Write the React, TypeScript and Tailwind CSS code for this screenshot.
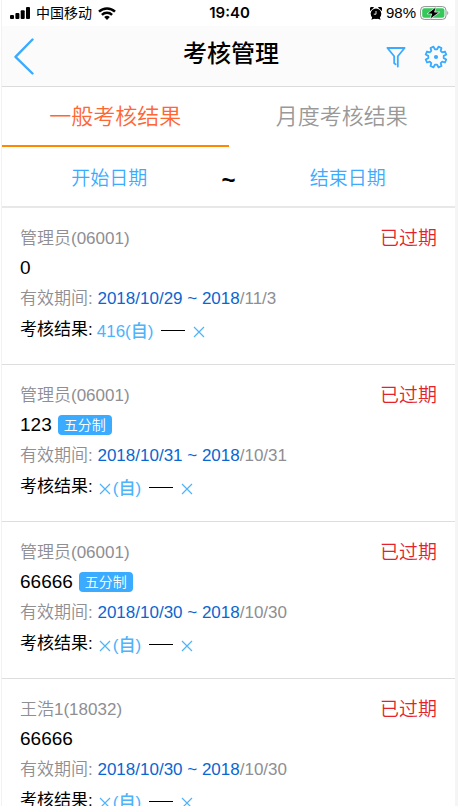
type Assessment = {
  id: number;
  person: string;
  title: string;
  tag?: string;
  range: string;
  rest: string;
  score?: string;
};

const ITEMS: Assessment[] = [
  { id: 1, person: '管理员(06001)', title: '0', range: '2018/10/29 ~ 2018', rest: '/11/3', score: '416' },
  { id: 2, person: '管理员(06001)', title: '123', tag: '五分制', range: '2018/10/31 ~ 2018', rest: '/10/31' },
  { id: 3, person: '管理员(06001)', title: '66666', tag: '五分制', range: '2018/10/30 ~ 2018', rest: '/10/30' },
  { id: 4, person: '王浩1(18032)', title: '66666', range: '2018/10/30 ~ 2018', rest: '/10/30' },
];

function Cross() {
  return (
    <svg viewBox="0 0 12 12" className="w-3 h-3" fill="none" stroke="currentColor" strokeWidth="1.2">
      <path d="M1 1l10 10M11 1L1 11" />
    </svg>
  );
}

function StatusBar() {
  return (
    <div className="grid grid-cols-3 items-center h-[26px] pl-2 pr-1.5 text-black">
      <div className="flex items-center gap-1.5">
        <svg viewBox="0 0 20 12" className="w-5 h-3" fill="currentColor">
          <rect x="0" y="8" width="4" height="4" rx="1" />
          <rect x="5.4" y="6" width="4" height="6" rx="1" />
          <rect x="10.7" y="3.2" width="4" height="8.8" rx="1" />
          <rect x="16" y="0" width="4" height="12" rx="1" />
        </svg>
        <span className="text-[14px] leading-5 whitespace-nowrap">中国移动</span>
        <svg viewBox="0 0 18 13" className="w-[18px] h-[13px]" fill="none" stroke="currentColor" strokeWidth="2.5">
          <path d="M1 4.7a11.5 11.5 0 0 1 16 0" />
          <path d="M3.9 7.9a7.4 7.4 0 0 1 10.2 0" />
          <path d="M9 13l-2.8-2.9a4 4 0 0 1 5.6 0z" fill="currentColor" stroke="none" />
        </svg>
      </div>
      <span className="text-center text-[15px] leading-5 font-semibold font-['Inter',sans-serif]">19:40</span>
      <div className="flex items-center justify-end gap-1">
        <svg viewBox="0 0 12 13" className="w-3 h-[13px]" fill="currentColor">
          <circle cx="6" cy="6.8" r="5.3" />
          <path d="M0.2 4A2.5 2.5 0 0 1 4 0.6zM11.8 4A2.5 2.5 0 0 0 8 0.6zM1.4 12.8l1-3 2.4 1.6zM10.6 12.8l-1-3-2.4 1.6z" />
          <path d="M6 4v3.2H3.8" fill="none" stroke="#fff" strokeWidth="0.9" />
        </svg>
        <span className="text-[15px] leading-5">98%</span>
        <svg viewBox="0 0 29 14" className="w-[29px] h-[14px]">
          <rect x="0.6" y="0.6" width="25.4" height="12.8" rx="3.6" fill="#fff" stroke="#8f8f8f" />
          <rect x="2.2" y="2.2" width="22.2" height="9.6" rx="2" fill="#34c759" />
          <path d="M27.3 5c1.3 0.5 1.3 3.6 0 4.1z" fill="#8f8f8f" />
          <path d="M16.2 0.8L7 7.9h4.7L10 13.2l9.6-7.1h-5z" fill="#000" stroke="#fff" strokeWidth="0.7" />
        </svg>
      </div>
    </div>
  );
}

function Header() {
  return (
    <header className="grid grid-cols-[1fr_auto_1fr] items-center h-[61px] pl-3 pr-[7px] bg-[#fbfbfb] border-b border-[#dcdcdc] text-[#3aabff]">
      <button type="button" aria-label="返回" className="justify-self-start">
        <svg viewBox="0 0 20 37" className="w-5 h-[37px]" fill="none" stroke="currentColor" strokeWidth="2.4" strokeLinecap="round" strokeLinejoin="round">
          <path d="M18.5 1.5L1.5 18.8l17 16.7" />
        </svg>
      </button>
      <h1 className="pb-1 text-2xl font-medium text-black">考核管理</h1>
      <div className="flex items-center justify-end gap-[18px] pt-0.5">
        <button type="button" aria-label="筛选">
          <svg viewBox="0 0 20 22" className="w-5 h-[22px]" fill="none" stroke="currentColor" strokeWidth="1.8" strokeLinejoin="round" strokeLinecap="round">
            <path d="M8.2 17.3V10.2L1.4 2h17.2l-6.8 8.2v10.4M8.2 17.3l1.4 0.9" />
          </svg>
        </button>
        <button type="button" aria-label="设置">
          <svg viewBox="-12 -12 24 24" className="w-6 h-6" fill="none" stroke="currentColor" strokeWidth="1.8" strokeLinejoin="round">
            <path d="M7.7 1.1L10.3 2.5 9 5.5 6.2 4.7 4.7 6.2 5.5 9 2.5 10.3 1.1 7.7H-1.1L-2.5 10.3-5.5 9-4.7 6.2-6.2 4.7-9 5.5-10.3 2.5-7.7 1.1V-1.1L-10.3-2.5-9-5.5-6.2-4.7-4.7-6.2-5.5-9-2.5-10.3-1.1-7.7H1.1L2.5-10.3 5.5-9 4.7-6.2 6.2-4.7 9-5.5 10.3-2.5 7.7-1.1z" />
            <circle r="2.1" fill="currentColor" stroke="none" />
          </svg>
        </button>
      </div>
    </header>
  );
}

function AssessmentItem({ item }: { item: Assessment }) {
  return (
    <li className="flex justify-between items-start pt-4 pb-[19px] px-[18px] border-b border-[#dedede] text-[17px]">
      <div>
        <p className="leading-[30px] font-[350] text-[#8e8e93]">{item.person}</p>
        <div className="flex items-center gap-1.5 h-7">
          <h2 className="text-[19px] text-black">{item.title}</h2>
          {item.tag && (
            <span className="px-1.5 rounded-sm bg-[#3aabff] text-sm leading-5 font-[350] text-white">{item.tag}</span>
          )}
        </div>
        <p className="leading-[33px] font-[350] text-[#8e8e93]">
          有效期间: <a href="#" className="font-normal text-[#0a66d0]">{item.range}</a>{item.rest}
        </p>
        <div className="flex items-center h-[30px] leading-[30px]">
          <span className="text-black">考核结果:</span>
          <span className="flex items-center ml-1 pt-1 text-[#4db3fb]">
            {item.score ?? <span className="mx-0.5"><Cross /></span>}
            (<span className="font-medium">自</span>)
          </span>
          <span className="w-6 mx-2 border-t border-black" />
          <span className="pt-1 text-[#4db3fb]"><Cross /></span>
        </div>
      </div>
      <span className="text-[19px] leading-[30px] font-[350] text-[#e5222b]">已过期</span>
    </li>
  );
}

export default function App() {
  return (
    <div className="h-screen bg-white pl-px font-['Liberation_Sans','Noto_Sans_CJK_SC',sans-serif]">
      <div className="flex flex-col h-full border-l border-r-[3px] border-l-[#f2f2f2] border-r-[#f5f5f5]">
        <StatusBar />
        <Header />

        {/* Tabs */}
        <nav className="flex text-[22px] font-[350]">
          <button type="button" className="flex-1 h-[60px] border-b-2 border-[#ff8800] text-[#ff6632]">一般考核结果</button>
          <button type="button" className="flex-1 h-[60px] border-b-2 border-transparent text-[#999999]">月度考核结果</button>
        </nav>

        {/* Date range */}
        <div className="flex items-center h-[61px] pt-1.5 border-b-2 border-[#e8e8e8] text-[19px] font-[350] text-[#3aabff]">
          <button type="button" className="flex-1">开始日期</button>
          <span className="w-6 text-center text-2xl leading-7 font-bold text-black">~</span>
          <button type="button" className="flex-1">结束日期</button>
        </div>

        <ul className="flex-1 min-h-0 overflow-y-auto [scrollbar-width:none]">
          {ITEMS.map((item) => (
            <AssessmentItem key={item.id} item={item} />
          ))}
        </ul>
      </div>
    </div>
  );
}
